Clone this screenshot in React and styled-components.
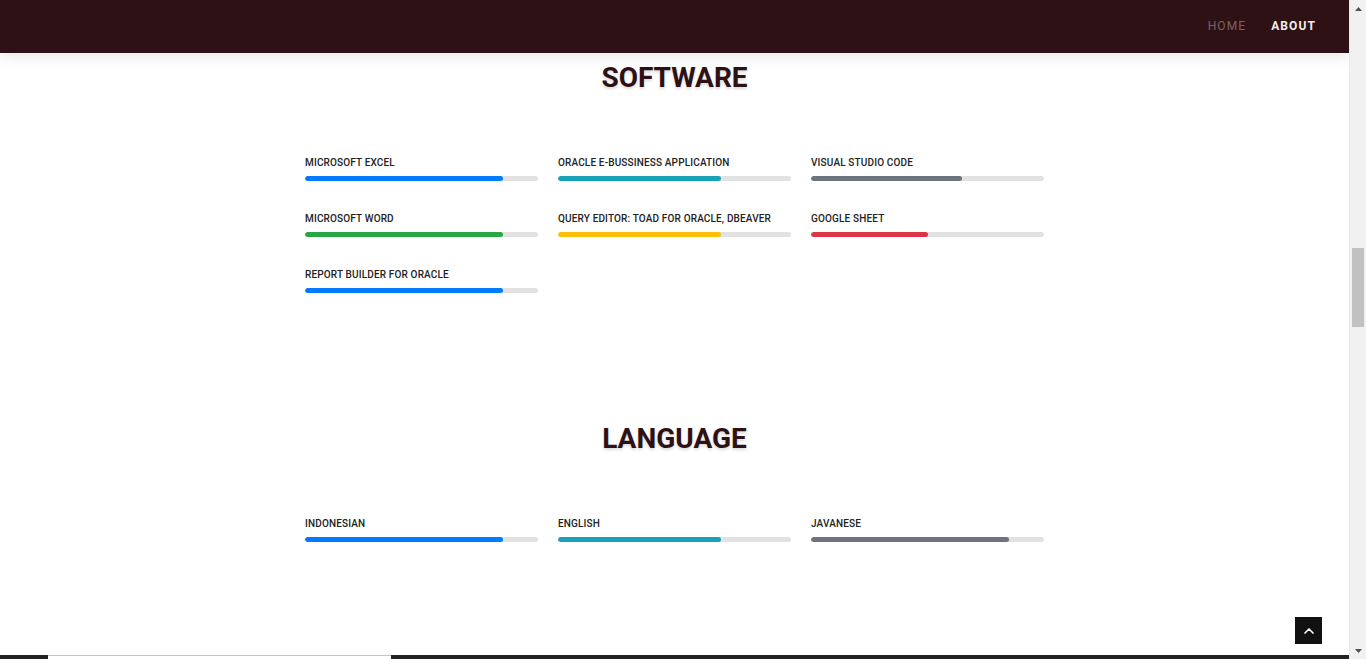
import React from "react";
import styled, { createGlobalStyle } from "styled-components";

const GlobalStyle = createGlobalStyle`
  html, body {
    margin: 0;
    padding: 0;
    height: 659px;
    overflow: hidden;
    background: #fff;
    font-family: Roboto, "Liberation Sans", Arial, sans-serif;
  }
  * { box-sizing: border-box; }
`;

const Shell = styled.div`
  display: flex;
  width: 1366px;
  height: 659px;
`;

const Page = styled.div`
  flex: 1;
  display: flex;
  flex-direction: column;
  height: 659px;
  overflow: hidden;
  position: relative;
`;

const Header = styled.header`
  flex: none;
  height: 53px;
  background: #2e1114;
  display: flex;
  justify-content: flex-end;
  align-items: center;
  padding-right: 33px;
  box-shadow: 0 2px 15px rgba(0, 0, 0, 0.12);
  position: relative;
  z-index: 2;
`;

const Nav = styled.nav`
  display: flex;
  gap: 25px;
`;

const NavLink = styled.a`
  font-size: 12px;
  letter-spacing: 1.1px;
  text-transform: uppercase;
  font-weight: ${(p) => (p.$active ? 700 : 400)};
  color: ${(p) => (p.$active ? "#f4eded" : "#7c6266")};
  text-decoration: none;
  line-height: 53px;
`;

const Section = styled.section`
  padding: ${(p) => (p.$first ? "8px" : "0")} 0 ${(p) => p.$bottom}px;
`;

const Title = styled.h2`
  margin: 0 0 60px;
  text-align: center;
  font-size: 28px;
  line-height: 34px;
  font-weight: 700;
  color: #2e1114;
  text-shadow: 0 2px 3px rgba(0, 0, 0, 0.15);
`;

const Grid = styled.div`
  width: 739px;
  margin: 0 auto;
  display: grid;
  grid-template-columns: repeat(3, 1fr);
  column-gap: 20px;
`;

const Skill = styled.div`
  padding-bottom: 30px;
`;

const Label = styled.span`
  display: block;
  font-size: 10px;
  line-height: 15px;
  font-weight: 500;
  letter-spacing: 0.15px;
  text-transform: uppercase;
  color: #222;
  margin-bottom: 6px;
`;

const Track = styled.div`
  height: 5px;
  border-radius: 3px;
  background: #e2e2e2;
  overflow: hidden;
`;

const Fill = styled.div`
  height: 100%;
  border-radius: 3px;
  background: ${(p) => p.$color};
`;

const Footer = styled.footer`
  flex: none;
  height: 200px;
  background: #222;
  padding-left: 48px;
`;

const FooterBox = styled.div`
  width: 343px;
  height: 120px;
  background: #fff;
  border-top: 1px solid #c4c4c4;
`;

const BackTop = styled.a`
  position: absolute;
  right: 27px;
  bottom: 15px;
  width: 27px;
  height: 27px;
  background: #111;
  display: flex;
  align-items: center;
  justify-content: center;
  z-index: 3;
`;

const ScrollBar = styled.div`
  width: 17px;
  height: 659px;
  background: #f1f1f1;
  display: flex;
  flex-direction: column;
  align-items: center;
  border-left: 1px solid #e8e8e8;
`;

const Arrow = styled.div`
  height: 17px;
  width: 100%;
  display: flex;
  align-items: center;
  justify-content: center;
  flex: none;
`;

const ThumbArea = styled.div`
  flex: 1;
  width: 100%;
  padding: 0 2px;
  padding-top: ${(p) => p.$offset}px;
`;

const Thumb = styled.div`
  height: ${(p) => p.$h}px;
  background: #c1c1c1;
`;

const software = [
  { name: "Microsoft Excel", value: 85, color: "#007bff" },
  { name: "Oracle E-Bussiness Application", value: 70, color: "#17a2b8" },
  { name: "Visual Studio Code", value: 65, color: "#6c757d" },
  { name: "Microsoft Word", value: 85, color: "#28a745" },
  { name: "Query Editor: Toad for Oracle, DBeaver", value: 70, color: "#ffc107" },
  { name: "Google Sheet", value: 50, color: "#dc3545" },
  { name: "Report Builder for Oracle", value: 85, color: "#007bff" },
];

const languages = [
  { name: "Indonesian", value: 85, color: "#007bff" },
  { name: "English", value: 70, color: "#17a2b8" },
  { name: "Javanese", value: 85, color: "#6c757d" },
];

function SkillList({ items }) {
  return (
    <Grid>
      {items.map((s) => (
        <Skill key={s.name}>
          <Label>{s.name}</Label>
          <Track>
            <Fill $color={s.color} style={{ width: `${s.value}%` }} />
          </Track>
        </Skill>
      ))}
    </Grid>
  );
}

export default function App() {
  return (
    <>
      <GlobalStyle />
      <Shell>
        <Page>
          <Header>
            <Nav>
              <NavLink href="#">Home</NavLink>
              <NavLink href="#" $active>
                About
              </NavLink>
            </Nav>
          </Header>
          <Section $first $bottom={99}>
            <Title>SOFTWARE</Title>
            <SkillList items={software} />
          </Section>
          <Section $bottom={83}>
            <Title>LANGUAGE</Title>
            <SkillList items={languages} />
          </Section>
          <Footer>
            <FooterBox />
          </Footer>
          <BackTop href="#">
            <svg width="16" height="16" viewBox="0 0 24 24" fill="none" stroke="#fff" strokeWidth="2.5" strokeLinecap="round" strokeLinejoin="round">
              <polyline points="6 15 12 9 18 15" />
            </svg>
          </BackTop>
        </Page>
        <ScrollBar>
          <Arrow>
            <svg width="7" height="4" viewBox="0 0 7 4">
              <polygon points="0,4 3.5,0 7,4" fill="#505050" />
            </svg>
          </Arrow>
          <ThumbArea $offset={231}>
            <Thumb $h={79} />
          </ThumbArea>
          <Arrow>
            <svg width="7" height="4" viewBox="0 0 7 4">
              <polygon points="0,0 3.5,4 7,0" fill="#505050" />
            </svg>
          </Arrow>
        </ScrollBar>
      </Shell>
    </>
  );
}
